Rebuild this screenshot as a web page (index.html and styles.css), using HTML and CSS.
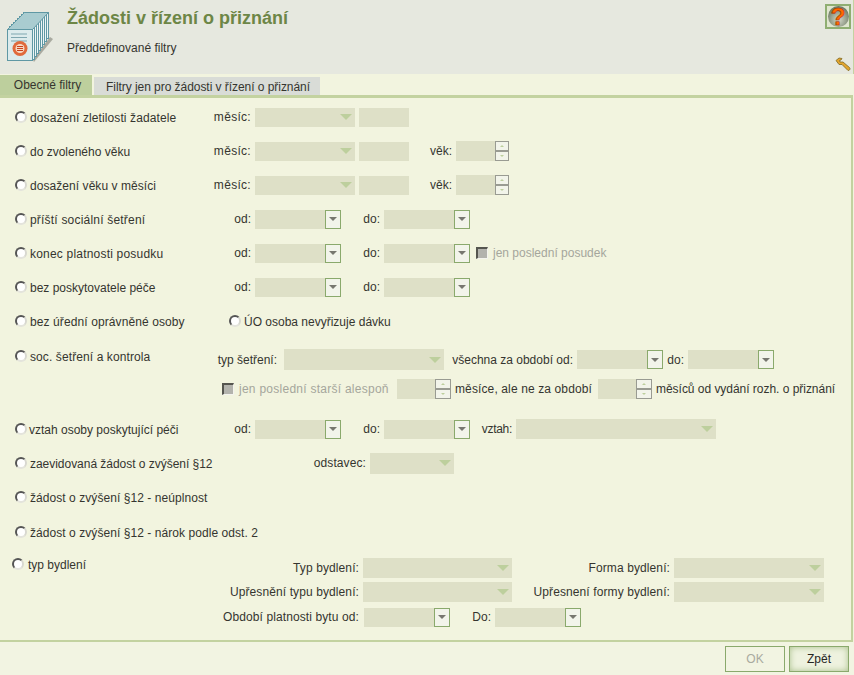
FILE: index.html
```html
<!DOCTYPE html>
<html lang="cs">
<head>
<meta charset="utf-8">
<title>Žádosti v řízení o přiznání</title>
<link rel="stylesheet" href="styles.css">
</head>
<body>
<div class="app">
  <header class="head">
    <svg class="logo" width="50" height="52" viewBox="0 0 50 52">
      <path d="M27 49 L44 26 L47 28 L28 51Z" fill="#77776c" opacity=".55"/>
      <g fill="#eef5f5" stroke="#5f98a4" stroke-width="1">
        <rect x="17.500" y="1.500" width="25" height="26"/>
        <rect x="15.500" y="3.500" width="25" height="27"/>
        <rect x="13.500" y="5.500" width="25" height="28"/>
        <rect x="11.500" y="7.500" width="25" height="29"/>
        <rect x="9.500" y="9.500" width="25" height="30"/>
        <rect x="7.500" y="11.500" width="25" height="31"/>
        <rect x="5.500" y="13.500" width="25" height="32"/>
        <rect x="3.500" y="15.500" width="25" height="33"/>
      </g>
      <path d="M1.500 18.500 L18.500 1.500 L42.500 1.500 L26.500 18.500Z" fill="#a9ccd0" stroke="#5f98a4"/>
      <rect class="logo-page" x="1.500" y="18.500" width="25" height="31" stroke="#5f98a4"/>
      <path d="M5 23H21M5 26.500H21M5 30H21" stroke="#7fa7b0" fill="none"/>
      <circle cx="14" cy="37.500" r="7.500" fill="#e06a3c"/>
      <circle cx="14" cy="37.500" r="4.500" fill="#f6d8c4"/>
      <path d="M11 35.500H17M11 37.500H17M11 39.500H17" stroke="#c8431c" fill="none"/>
    </svg>
    <div class="head-text">
      <h1 class="title">Žádosti v řízení o přiznání</h1>
      <p class="sub">Předdefinované filtry</p>
    </div>
    <div class="help"><span class="help-ball"><span class="help-q">?</span></span></div>
    <svg class="wrench" width="16" height="15" viewBox="0 0 16 15">
      <path d="M1 3.500 L4 1 L7 1.500 L6 3 L4.500 3.500 L5 5 L6.500 5 L8 5 L14.500 10.500 C15.500 11.500 15 13.500 13 13.500 L7 7.500 L4 7.500 Z" fill="#e3a52e" stroke="#7d6a24" stroke-width=".8"/>
    </svg>
  </header>

  <nav class="tabs">
    <span class="tab tab-on">Obecné filtry</span>
    <span class="tab tab-off">Filtry jen pro žádosti v řízení o přiznání</span>
  </nav>

  <main class="panel">
    <div class="row">
      <label class="opt s1"><i class="radio"></i>dosažení zletilosti žadatele</label>
      <span class="lbl wide">měsíc:</span><span class="sel w100"><i class="arrow"></i></span><span class="inp w50"></span>
    </div>
    <div class="row">
      <label class="opt"><i class="radio"></i>do zvoleného věku</label>
      <span class="lbl wide">měsíc:</span><span class="sel w100"><i class="arrow"></i></span><span class="inp w50"></span>
      <span class="lbl-vek">věk:</span><span class="spin spin-a"><span class="spin-f"></span><span class="spin-b"><b class="up"></b><b class="dn"></b></span></span>
    </div>
    <div class="row">
      <label class="opt s05"><i class="radio"></i>dosažení věku v měsíci</label>
      <span class="lbl wide">měsíc:</span><span class="sel w100"><i class="arrow"></i></span><span class="inp w50"></span>
      <span class="lbl-vek">věk:</span><span class="spin spin-a"><span class="spin-f"></span><span class="spin-b"><b class="up"></b><b class="dn"></b></span></span>
    </div>
    <div class="row">
      <label class="opt s2"><i class="radio"></i>příští sociální šetření</label>
      <span class="lbl">od:</span><span class="date"><span class="date-f"></span><span class="date-b"><i></i></span></span>
      <span class="lbl-do">do:</span><span class="date"><span class="date-f"></span><span class="date-b"><i></i></span></span>
    </div>
    <div class="row">
      <label class="opt s2"><i class="radio"></i>konec platnosti posudku</label>
      <span class="lbl">od:</span><span class="date"><span class="date-f"></span><span class="date-b"><i></i></span></span>
      <span class="lbl-do">do:</span><span class="date"><span class="date-f"></span><span class="date-b"><i></i></span></span>
      <i class="check chk-a"></i><span class="off">jen poslední posudek</span>
    </div>
    <div class="row">
      <label class="opt"><i class="radio"></i>bez poskytovatele péče</label>
      <span class="lbl">od:</span><span class="date"><span class="date-f"></span><span class="date-b"><i></i></span></span>
      <span class="lbl-do">do:</span><span class="date"><span class="date-f"></span><span class="date-b"><i></i></span></span>
    </div>
    <div class="row">
      <label class="opt opt-free s1"><i class="radio"></i>bez úřední oprávněné osoby</label>
      <label class="opt-free"><i class="radio"></i>ÚO osoba nevyřizuje dávku</label>
    </div>

    <div class="row row-soc">
      <label class="opt opt-soc s1"><i class="radio"></i>soc. šetření a kontrola</label>
      <div class="soc">
        <div class="soc-line soc-one">
          <span class="lbl-typ">typ šetření:</span><span class="sel w160 h21"><i class="arrow"></i></span>
          <span class="lbl-vse">všechna za období od:</span><span class="date"><span class="date-f"></span><span class="date-b"><i></i></span></span>
          <span class="lbl-do2">do:</span><span class="date"><span class="date-f"></span><span class="date-b"><i></i></span></span>
        </div>
        <div class="soc-line soc-two">
          <i class="check"></i><span class="off off-b">jen poslední starší alespoň</span>
          <span class="spin spin-b2"><span class="spin-f"></span><span class="spin-b"><b class="up"></b><b class="dn"></b></span></span>
          <span class="txt-m">měsíce, ale ne za období</span>
          <span class="spin spin-b2"><span class="spin-f"></span><span class="spin-b"><b class="up"></b><b class="dn"></b></span></span>
          <span class="txt-n">měsíců od vydání rozh. o přiznání</span>
        </div>
      </div>
    </div>

    <div class="row">
      <label class="opt opt-v"><i class="radio"></i>vztah osoby poskytující péči</label>
      <span class="lbl">od:</span><span class="date"><span class="date-f"></span><span class="date-b"><i></i></span></span>
      <span class="lbl-do">do:</span><span class="date"><span class="date-f"></span><span class="date-b"><i></i></span></span>
      <span class="lbl-vz">vztah:</span><span class="sel w200 h20"><i class="arrow"></i></span>
    </div>
    <div class="row">
      <label class="opt sm"><i class="radio"></i>zaevidovaná žádost o zvýšení §12</label>
      <span class="lbl-ods">odstavec:</span><span class="sel w84 h21"><i class="arrow"></i></span>
    </div>
    <div class="row">
      <label class="opt s05"><i class="radio"></i>žádost o zvýšení §12 - neúplnost</label>
    </div>
    <div class="row row-low">
      <label class="opt opt-wide s05"><i class="radio"></i>žádost o zvýšení §12 - nárok podle odst. 2</label>
    </div>

    <div class="byt">
      <label class="opt opt-byt"><i class="radio"></i>typ bydlení</label>
      <div class="byt-grid">
        <div class="byt-line">
          <span class="lbl-b">Typ bydlení:</span><span class="sel w149 h20"><i class="arrow"></i></span>
          <span class="lbl-c">Forma bydlení:</span><span class="sel w150 h20"><i class="arrow"></i></span>
        </div>
        <div class="byt-line">
          <span class="lbl-b">Upřesnění typu bydlení:</span><span class="sel w149 h20"><i class="arrow"></i></span>
          <span class="lbl-c">Upřesnení formy bydlení:</span><span class="sel w150 h20"><i class="arrow"></i></span>
        </div>
        <div class="byt-line byt-last">
          <span class="lbl-b">Období platnosti bytu od:</span><span class="date date-sp"><span class="date-f"></span><span class="date-b"><i></i></span></span>
          <span class="lbl-d">Do:</span><span class="date"><span class="date-f"></span><span class="date-b"><i></i></span></span>
        </div>
      </div>
    </div>
  </main>

  <footer class="foot">
    <span class="btn btn-off">OK</span>
    <span class="btn btn-on">Zpět</span>
  </footer>
</div>
</body>
</html>
```

FILE: styles.css
```css
* { box-sizing: border-box; }
html, body { margin: 0; padding: 0; }
body {
  width: 854px;
  height: 675px;
  overflow: hidden;
  font-family: "Liberation Sans", Arial, sans-serif;
  font-size: 12px;
  color: #35352f;
  background: #f2f4df;
}
.app { display: flex; flex-direction: column; height: 675px; }

/* header */
.head {
  position: relative;
  display: flex;
  height: 74px;
  background: #e6e8df;
  border-right: 1px solid #c3d2a0;
}
.logo { margin: 11px 0 0 6px; flex: none; }
.logo-page { fill: #dcebec; }
.head-text { margin-left: 11px; }
.title {
  margin: 8px 0 0;
  font-size: 18px;
  line-height: 21px;
  font-weight: bold;
  color: #6d8646;
}
.sub { margin: 12px 0 0; line-height: 14px; }
.help {
  position: absolute;
  left: 825px;
  top: 4px;
  width: 26px;
  height: 25px;
  border: 2px solid #8fae72;
  background: #dfe6cf;
  display: flex;
  align-items: center;
  justify-content: center;
}
.help-ball {
  width: 21px;
  height: 21px;
  border-radius: 50%;
  background: radial-gradient(circle at 50% 65%, #d5dacb, #59664f 90%);
  display: flex;
  align-items: center;
  justify-content: center;
}
.help-q {
  font-size: 24px;
  line-height: 21px;
  font-weight: bold;
  color: #ff6a00;
  -webkit-text-stroke: .6px #a82c00;
}
.wrench { position: absolute; left: 835px; top: 57px; }

/* tabs */
.tabs {
  display: flex;
  align-items: flex-end;
  height: 21px;
  padding-top: 1px;
  background: #f2f4df;
}
.tab { display: block; text-align: center; }
.tab-on {
  width: 92px;
  height: 20px;
  padding-left: 3px;
  line-height: 20px;
  background: #bdcf9d;
}
.tab-off {
  width: 226px;
  height: 18px;
  margin-left: 2px;
  padding-left: 2px;
  line-height: 20px;
  letter-spacing: -.05px;
  background: #d9dcd7;
}

/* main panel */
.panel {
  flex: none;
  height: 547px;
  margin-right: 1px;
  padding-top: 2px;
  border-top: 3px solid #c3d2a0;
  border-right: 2px solid #c3d2a0;
  border-bottom: 2px solid #c3d2a0;
  background: #f2f4df;
}
.row {
  display: flex;
  align-items: center;
  height: 34px;
  padding-left: 15px;
}
.row-low { padding-top: 2px; }
.opt {
  display: flex;
  align-items: center;
  width: 196px;
  flex: none;
  padding-top: 2px;
  white-space: nowrap;
}
.s05 { letter-spacing: .06px; }
.s1 { letter-spacing: .1px; }
.s2 { letter-spacing: .2px; }
.sm { letter-spacing: -.03px; }
.opt-wide { width: 300px; }
.opt-free { display: flex; align-items: center; padding-top: 2px; white-space: nowrap; }
.opt-free.opt { width: 214px; }
.radio {
  flex: none;
  display: block;
  width: 12px;
  height: 12px;
  margin: 0 3px 2px 0;
  border-radius: 50%;
  background: #fff;
  border: 2px solid;
  border-color: #555 #d8d8d0 #e4e4dc #555;
}
.opt-v .radio { margin-right: 2px; }

.lbl, .lbl-do, .lbl-vek, .lbl-typ, .lbl-vse, .lbl-do2, .lbl-vz, .lbl-ods, .lbl-b, .lbl-c, .lbl-d {
  flex: none;
  text-align: right;
  margin-right: 4px;
  white-space: nowrap;
}
.lbl { width: 40px; }
.lbl.wide { letter-spacing: .3px; }
.lbl-do { width: 39px; }
.lbl-vek { width: 43px; }
.lbl-vz { width: 42px; letter-spacing: -.3px; }
.lbl-ods { width: 155px; letter-spacing: .1px; }

/* fields */
.sel, .inp, .date-f, .spin-f { display: block; background: #dee0c7; flex: none; }
.sel { position: relative; height: 19px; }
.inp { height: 19px; margin-left: 4px; }
.w50 { width: 50px; }
.w84 { width: 84px; }
.w100 { width: 100px; }
.w149 { width: 149px; }
.w150 { width: 150px; }
.w160 { width: 160px; }
.w200 { width: 200px; }
.h20 { height: 20px; }
.h21 { height: 21px; }
.arrow {
  position: absolute;
  right: 3px;
  top: 50%;
  margin-top: -3px;
  width: 0;
  height: 0;
  border-left: 6px solid transparent;
  border-right: 6px solid transparent;
  border-top: 6px solid #bdcf9d;
}
.date { display: flex; flex: none; width: 86px; height: 19px; }
.date-f { flex: 1; }
.date-b {
  width: 16px;
  border: 1px solid #8aa96c;
  background: #f2f4ea;
  display: flex;
  align-items: center;
  justify-content: center;
}
.date-b i {
  width: 0;
  height: 0;
  border-left: 4px solid transparent;
  border-right: 4px solid transparent;
  border-top: 4px solid #77776f;
}
.spin { display: flex; flex: none; height: 20px; }
.spin-a { width: 53px; }
.spin-a .spin-f { width: 39px; }
.spin-b2 { width: 54px; }
.spin-b2 .spin-f { width: 38px; }
.spin-b {
  flex: 1;
  display: flex;
  flex-direction: column;
  background: #f2f4ea;
  border: 1px solid #999b92;
}
.spin-b b { display: flex; flex: 1; align-items: center; justify-content: center; }
.spin-b .up { border-bottom: 2px solid #999b92; }
.up::before, .dn::before {
  content: "";
  width: 0;
  height: 0;
  border-left: 2px solid transparent;
  border-right: 2px solid transparent;
}
.up::before { border-bottom: 2px solid #bdcf9d; }
.dn::before { border-top: 2px solid #bdcf9d; }
.check {
  flex: none;
  display: block;
  width: 12px;
  height: 12px;
  margin-left: 6px;
  background: #b3b3ad;
  border: 1px solid #f4f4ee;
  border-top: 2px solid #55554f;
  border-left: 2px solid #55554f;
}
.off { margin-left: 5px; color: #a5a69c; white-space: nowrap; }

/* soc row */
.row-soc { align-items: flex-start; height: 74px; }
.opt-soc { margin-top: 10px; }
.soc { display: flex; flex-direction: column; }
.soc-line { display: flex; align-items: center; white-space: nowrap; }
.soc-one { height: 21px; margin-top: 11px; }
.lbl-typ { width: 66px; margin: 0 7px 0 0; }
.lbl-vse { width: 129px; }
.lbl-do2 { width: 21px; margin-right: 4px; }
.soc-two { height: 20px; margin-top: 9px; margin-left: 5px; }
.off-b { width: 158px; letter-spacing: .26px; }
.txt-m { margin-left: 4px; width: 143px; letter-spacing: .12px; }
.txt-n { margin-left: 4px; letter-spacing: -.03px; }

/* housing */
.byt { display: flex; height: 92px; padding-left: 12px; }
.opt-byt { width: 199px; height: 16px; margin-top: 8px; }
.opt-byt .radio { margin-right: 4px; }
.byt-grid { display: flex; flex-direction: column; margin-top: 10px; }
.byt-line { display: flex; align-items: center; height: 20px; margin-bottom: 4px; }
.byt-last { margin-top: 1px; }
.lbl-b { width: 148px; letter-spacing: .1px; }
.lbl-c { width: 158px; letter-spacing: .1px; }
.lbl-d { width: 41px; }
.date-sp { margin-left: 1px; }

/* footer */
.foot {
  flex: 1;
  display: flex;
  justify-content: flex-end;
  gap: 4px;
  padding: 4px 5px 0 0;
  background: #f2f4e2;
}
.btn {
  display: block;
  width: 60px;
  height: 26px;
  line-height: 24px;
  text-align: center;
  border: 1px solid #8aa96c;
}
.btn-off { color: #a9aa9f; background: #f2f4e2; }
.btn-on {
  color: #26261f;
  background: #eef2df;
  box-shadow: inset 0 0 6px #a9c08b;
}
```
